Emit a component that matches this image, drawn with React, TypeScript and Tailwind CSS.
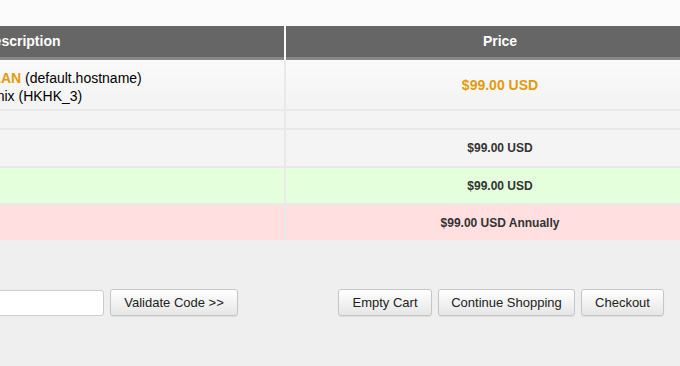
export default function App() {
  const btn =
    "h-[27px] rounded-[3px] border border-[#c6c6c6] bg-gradient-to-b from-white to-[#e6e6e6] text-[13px] text-[#222] shadow-[0_1px_1px_rgba(0,0,0,0.08)] flex items-center justify-center";

  return (
    <div className="w-[680px] h-[366px] overflow-hidden bg-[#efefef] font-['Liberation_Sans',Arial,sans-serif]">
      {/* cart table */}
      <div className="bg-[#fbfbfb] pt-[26px]">
        <div className="ml-[-240px] grid grid-cols-[524px_428px] gap-x-[2px]">
          <div className="h-[34px] bg-[#666] border-b-[3px] border-[#888] flex items-center justify-center text-[14px] font-bold text-white">
            Description
          </div>
          <div className="h-[34px] bg-[#666] border-b-[3px] border-[#888] flex items-center justify-center text-[14px] font-bold text-white">
            Price
          </div>
        </div>
      </div>

      <div className="ml-[-240px] w-[954px] grid grid-cols-[524px_428px] gap-x-[2px] gap-y-[2px] bg-[#e9e9e9]">
        <div className="h-[49px] bg-gradient-to-b from-[#fafafa] to-[#f3f3f3] pl-[223px] pt-[9px] text-[14px] leading-[18px] text-black">
          <div>
            <span className="font-bold text-[#e39b0b]">PLAN</span> (default.hostname)
          </div>
          <div className="ml-[-19px]">Phoenix (HKHK_3)</div>
        </div>
        <div className="h-[49px] bg-gradient-to-b from-[#fafafa] to-[#f3f3f3] flex items-center justify-center text-[14px] font-bold text-[#e39b0b] pt-[2px]">
          $99.00 USD
        </div>

        <div className="h-[17px] bg-[#f4f4f4]" />
        <div className="h-[17px] bg-[#f4f4f4]" />

        <div className="h-[36px] bg-[#f4f4f4]" />
        <div className="h-[36px] bg-[#f4f4f4] flex items-center justify-center text-[12px] font-bold text-[#333]">
          $99.00 USD
        </div>

        <div className="h-[35px] bg-[#e4ffdc]" />
        <div className="h-[35px] bg-[#e4ffdc] flex items-center justify-center text-[12px] font-bold text-[#333]">
          $99.00 USD
        </div>

        <div className="h-[35px] bg-[#ffdfdf]" />
        <div className="h-[35px] bg-[#ffdfdf] flex items-center justify-center text-[12px] font-bold text-[#333]">
          $99.00 USD Annually
        </div>
      </div>

      {/* actions */}
      <div className="mt-[49px] flex items-center pr-[16px]">
        <input
          type="text"
          className="ml-[-76px] w-[180px] h-[26px] rounded-[3px] border border-[#cccccc] bg-white outline-none"
        />
        <button className={`${btn} ml-[6px] w-[128px]`}>Validate Code &gt;&gt;</button>
        <div className="ml-auto flex gap-[6px]">
          <button className={`${btn} w-[94px]`}>Empty Cart</button>
          <button className={`${btn} w-[137px]`}>Continue Shopping</button>
          <button className={`${btn} w-[83px]`}>Checkout</button>
        </div>
      </div>
    </div>
  );
}
